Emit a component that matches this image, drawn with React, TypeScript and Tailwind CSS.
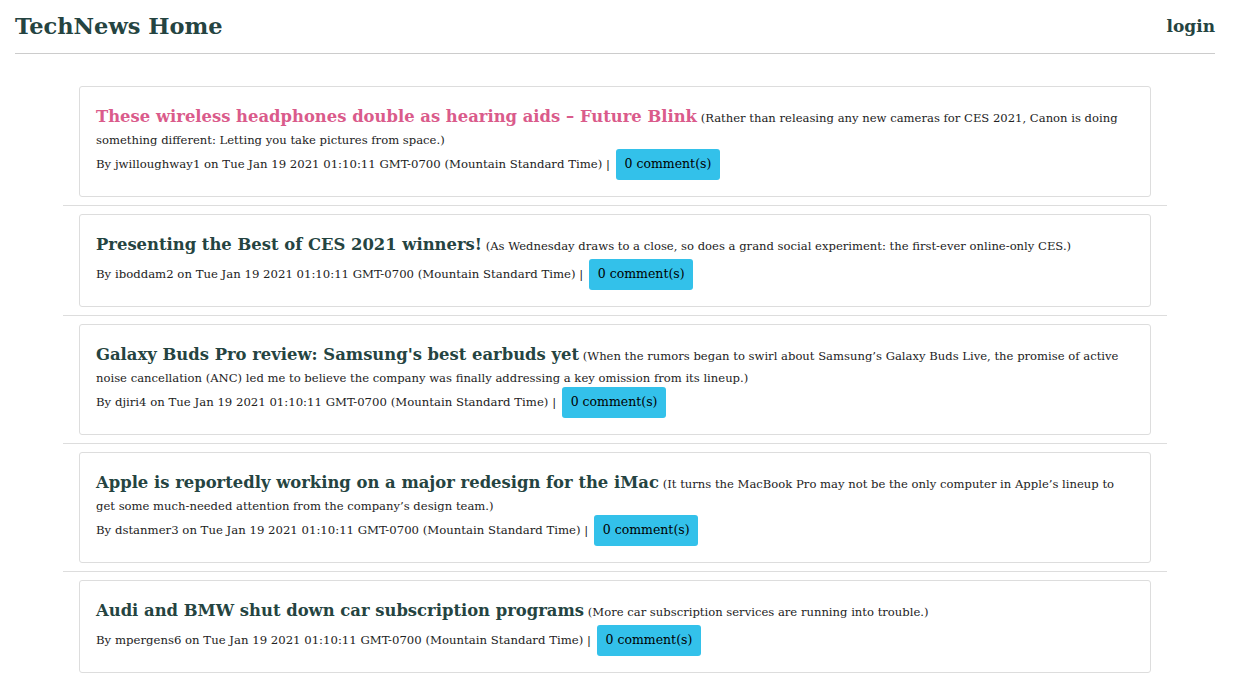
const posts = [
  {
    title: "These wireless headphones double as hearing aids – Future Blink",
    desc: "Rather than releasing any new cameras for CES 2021, Canon is doing something different: Letting you take pictures from space.",
    user: "jwilloughway1",
    hot: true,
  },
  {
    title: "Presenting the Best of CES 2021 winners!",
    desc: "As Wednesday draws to a close, so does a grand social experiment: the first-ever online-only CES.",
    user: "iboddam2",
  },
  {
    title: "Galaxy Buds Pro review: Samsung's best earbuds yet",
    desc: "When the rumors began to swirl about Samsung’s Galaxy Buds Live, the promise of active noise cancellation (ANC) led me to believe the company was finally addressing a key omission from its lineup.",
    user: "djiri4",
  },
  {
    title: "Apple is reportedly working on a major redesign for the iMac",
    desc: "It turns the MacBook Pro may not be the only computer in Apple’s lineup to get some much-needed attention from the company’s design team.",
    user: "dstanmer3",
  },
  {
    title: "Audi and BMW shut down car subscription programs",
    desc: "More car subscription services are running into trouble.",
    user: "mpergens6",
  },
];

const App = () => {
  return (
    <div className="min-h-screen bg-white pl-[15px] pr-[33px] font-['DejaVu_Serif',serif] text-[#254441]">
      <header className="flex h-[54px] items-center justify-between border-b border-[#ccc]">
        <h1 className="text-[22.5px] font-bold">TechNews Home</h1>
        <a className="text-[17px] font-bold">login</a>
      </header>

      <main className="mx-[48px] pt-[24px]">
        {posts.map((p) => (
          <div key={p.user} className="border-b border-[#ddd] px-4 py-2 last:border-b-0">
            <div className="rounded-[3px] border border-[#ddd] p-4">
              <p className="text-[11.6px] leading-[18px] text-[#222]">
                <span
                  className={`text-[16.4px] leading-[28px] font-bold ${p.hot ? "text-[#da5b8b]" : "text-[#254441]"}`}
                >
                  {p.title}
                </span>{" "}
                ({p.desc})
              </p>
              <div className="flex h-[31px] items-center text-[11.7px] text-[#222]">
                <span>
                  By {p.user} on Tue Jan 19 2021 01:10:11 GMT-0700 (Mountain Standard Time) |
                </span>
                <button className="ml-[6px] h-[31px] w-[104px] rounded-[3px] bg-[#33c1ea] text-[12.5px] text-black">
                  0 comment(s)
                </button>
              </div>
            </div>
          </div>
        ))}
      </main>
    </div>
  );
};

export default App;
